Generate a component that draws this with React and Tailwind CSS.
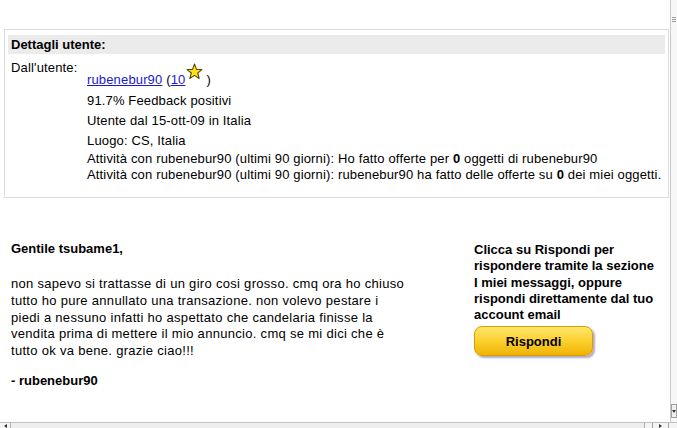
import React from "react";

const font = { fontFamily: '"Liberation Sans", Arial, sans-serif' };

function Star() {
  return (
    <svg width="17" height="17" viewBox="0 0 16 16" className="mb-[8px] ml-[1px] mr-[3px]">
      <path
        d="M8 1 L9.9 6 L15 6.2 L11 9.4 L12.4 14.6 L8 11.6 L3.6 14.6 L5 9.4 L1 6.2 L6.1 6 Z"
        fill="#ffe21a"
        stroke="#5a4a00"
        strokeWidth="1"
        strokeLinejoin="round"
      />
    </svg>
  );
}

export default function App() {
  return (
    <div className="w-[677px] h-[428px] bg-white flex flex-col overflow-hidden text-black" style={font}>
      <div className="flex-1 flex min-h-0">
        <div className="flex-1 min-w-0 pt-[29px] pl-[4px] pr-[1px]">
          {/* user details box */}
          <div className="border border-[#dcdcdc] px-[3px] pt-[5px] pb-[14px] text-[13px]">
            <div className="h-[19px] bg-[#ebebeb] font-bold leading-[19px] pl-[3px]">Dettagli utente:</div>
            <div className="flex mt-[6px] tracking-[0.15px] whitespace-nowrap">
              <div className="w-[79px] pl-[3px] leading-[15px] shrink-0">Dall'utente:</div>
              <div className="leading-[20px]">
                <div className="flex items-end h-[28px] leading-[15px]">
                  <span className="pb-[1px]">
                    <a className="text-[#1a1acc] underline">rubenebur90</a> (<a className="text-[#1a1acc] underline">10</a>
                  </span>
                  <Star />
                  <span className="pb-[1px]">)</span>
                </div>
                <div className="mt-[3px]">91.7% Feedback positivi</div>
                <div>Utente dal 15-ott-09 in Italia</div>
                <div>Luogo: CS, Italia</div>
                <div className="leading-[16px]">
                  Attività con rubenebur90 (ultimi 90 giorni): Ho fatto offerte per <b>0</b> oggetti di rubenebur90
                  <br />
                  Attività con rubenebur90 (ultimi 90 giorni): rubenebur90 ha fatto delle offerte su <b>0</b> dei miei oggetti.
                </div>
              </div>
            </div>
          </div>

          {/* message */}
          <div className="flex mt-[42px] text-[13px]">
            <div className="w-[470px] pl-[7px] shrink-0">
              <div className="font-bold leading-[17px]">Gentile tsubame1,</div>
              <div className="mt-[19px] leading-[16.75px] tracking-[0.3px] whitespace-nowrap">
                non sapevo si trattasse di un giro cosi grosso. cmq ora ho chiuso
                <br />
                tutto ho pure annullato una transazione. non volevo pestare i
                <br />
                piedi a nessuno infatti ho aspettato che candelaria finisse la
                <br />
                vendita prima di mettere il mio annuncio. cmq se mi dici che è
                <br />
                tutto ok va bene. grazie ciao!!!
              </div>
              <div className="mt-[12px] font-bold leading-[17px]">- rubenebur90</div>
            </div>
            <div className="pt-[2px]">
              <div className="font-bold leading-[16.25px] whitespace-nowrap">
                Clicca su Rispondi per
                <br />
                rispondere tramite la sezione
                <br />
                I miei messaggi, oppure
                <br />
                rispondi direttamente dal tuo
                <br />
                account email
              </div>
              <button className="mt-[3px] w-[119px] h-[30px] rounded-[8px] border border-[#d49f00] bg-gradient-to-b from-[#ffe66a] via-[#fcd02a] to-[#efb400] shadow-[2px_2px_2px_#b8a8c8] font-bold text-[13px] text-black flex items-center justify-center">
                Rispondi
              </button>
            </div>
          </div>
        </div>

        {/* vertical scrollbar */}
        <div className="w-[7px] shrink-0 border-l border-[#c9c9c9] bg-[#f7f7f7] flex flex-col justify-between">
          <div className="mt-[17px] ml-[1px] flex flex-col gap-[1px]">
            <div className="w-[4px] h-[1px] bg-[#9a9a9a]" />
            <div className="w-[4px] h-[1px] bg-[#9a9a9a]" />
            <div className="w-[4px] h-[1px] bg-[#9a9a9a]" />
          </div>
          <div className="h-[14px] border border-[#a0a0a0] bg-[#f0f0f0] mb-[4px] flex items-center justify-center">
            <div className="w-0 h-0 border-l-[2px] border-r-[2px] border-t-[3px] border-l-transparent border-r-transparent border-t-[#333]" />
          </div>
        </div>
      </div>

      {/* horizontal scrollbar */}
      <div className="h-[6px] flex items-start border-t border-[#c0c0c0] bg-[#f4f4f4]">
        <div className="w-[10px] h-full flex items-center justify-center">
          <div className="w-0 h-0 border-t-[2px] border-b-[2px] border-r-[3px] border-t-transparent border-b-transparent border-r-[#333]" />
        </div>
        <div className="w-[635px] h-full border-x border-[#b0b0b0] bg-[#eeeeee]" />
        <div className="ml-[7px] w-[17px] h-full border-x border-[#a0a0a0] flex items-center justify-center">
          <div className="w-0 h-0 border-t-[2px] border-b-[2px] border-l-[3px] border-t-transparent border-b-transparent border-l-[#333]" />
        </div>
      </div>
    </div>
  );
}
